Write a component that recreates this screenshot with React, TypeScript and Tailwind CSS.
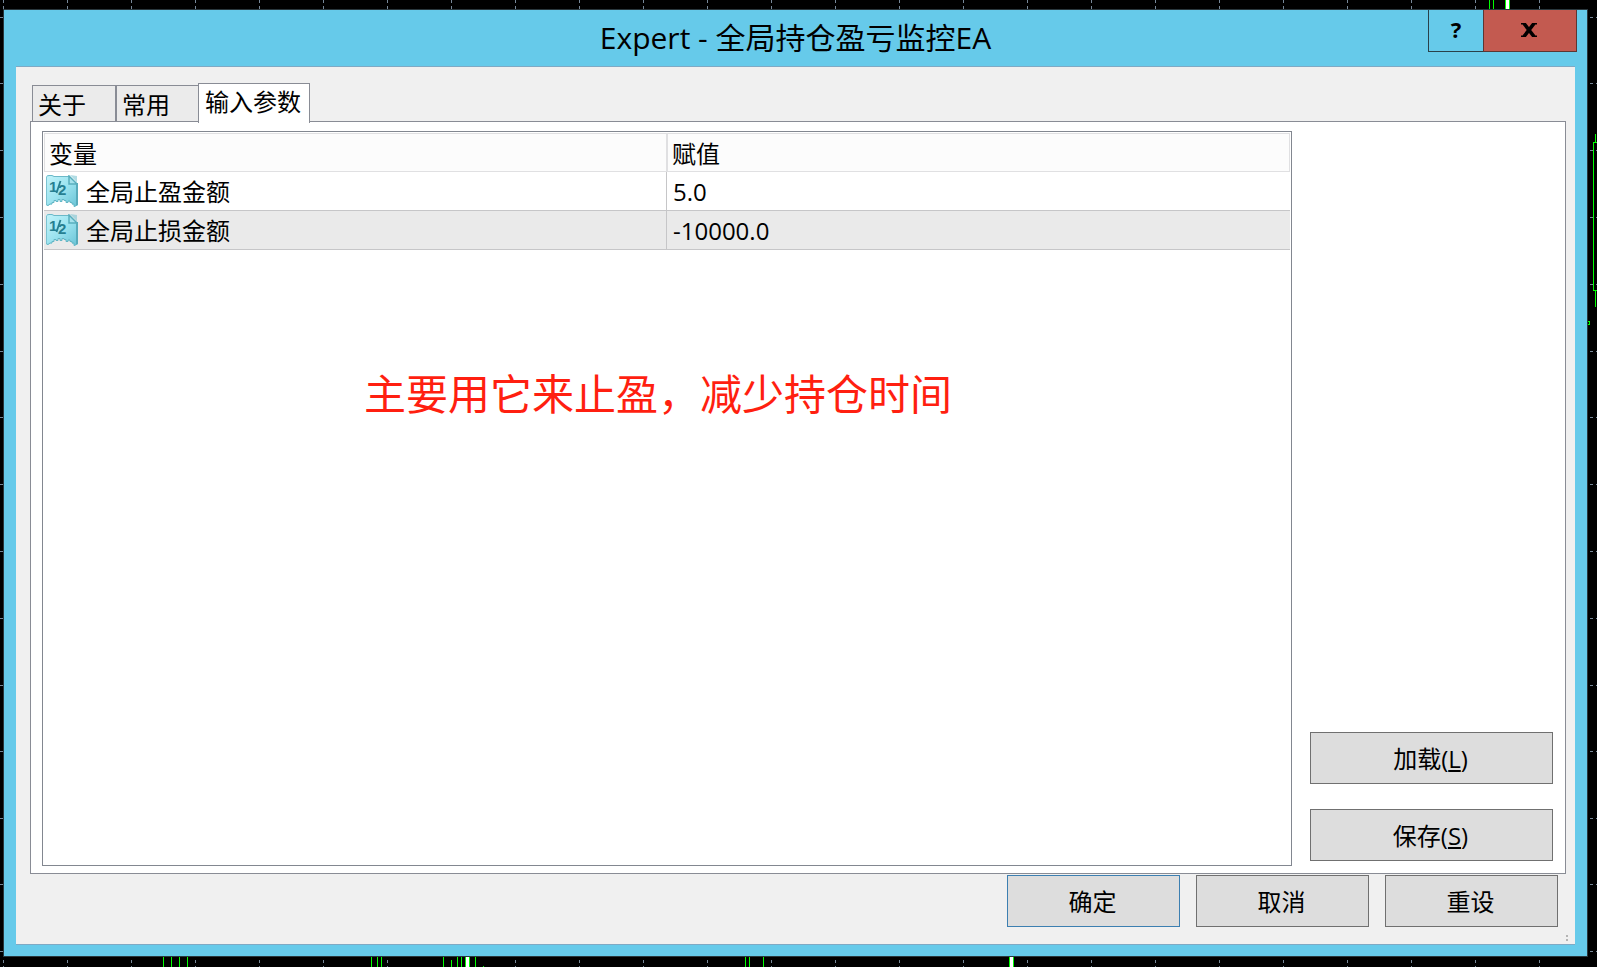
import React, { useState } from 'react';

interface Param {
    name: string;
    value: string;
}

const params: Param[] = [
    { name: '全局止盈金额', value: '5.0' },
    { name: '全局止损金额', value: '-10000.0' },
];

const tabs = [
    { label: '关于', width: 'w-[84px] border-r' },
    { label: '常用', width: 'w-[82px]' },
    { label: '输入参数', width: 'w-28' },
];

const gridX = Array.from({ length: 25 }, (_, i) => 3 + i * 64);
const gridY = [17, 83, 150, 217, 284, 351, 417, 484, 551, 618, 685, 751, 818, 884, 951];

// x, y, height of the thin price bars
const bars = [
    [1489, 0, 9], [1493, 0, 9],
    [163, 957, 10], [171, 957, 10], [179, 957, 10], [187, 957, 10],
    [371, 957, 10], [377, 957, 10], [381, 957, 10],
    [443, 957, 10], [451, 960, 7], [457, 957, 10], [461, 957, 10], [475, 957, 10], [483, 966, 1],
    [745, 957, 10], [749, 957, 10], [763, 957, 10],
    [1595, 134, 8], [1595, 291, 16],
];

const candles = [
    [1505, 0, 9], [465, 957, 10], [1009, 957, 10],
];

const ChartBackground: React.FC = () => (
    <svg className="absolute inset-0 h-full w-full" shapeRendering="crispEdges" aria-hidden="true">
        <g fill="#778899">
            {gridX.map(x => (
                <g key={x}>
                    <rect x={x} y={0} width={1} height={3} />
                    <rect x={x} y={6} width={1} height={3} />
                    <rect x={x} y={960} width={1} height={3} />
                    <rect x={x} y={966} width={1} height={1} />
                </g>
            ))}
            {gridY.map(y => (
                <g key={y}>
                    <rect x={0} y={y} width={3} height={1} />
                    <rect x={1590} y={y} width={3} height={1} />
                    <rect x={1596} y={y} width={1} height={1} />
                </g>
            ))}
        </g>
        <g fill="#00ff00">
            {bars.map(([x, y, h]) => (
                <rect key={`${x}-${y}`} x={x} y={y} width={1} height={h} />
            ))}
            {candles.map(([x, y, h]) => (
                <g key={x}>
                    <rect x={x} y={y} width={5} height={h} />
                    <rect x={x + 1} y={y} width={3} height={h} fill="#fff" />
                </g>
            ))}
            <path d="M1593 142h4v1h-3v147h3v1h-4z" />
            <path d="M1588 321h2v4h-2v-1h1v-2h-1z" />
        </g>
    </svg>
);

const ParamIcon: React.FC = () => (
    <svg width="32" height="32" viewBox="0 0 32 32" className="shrink-0" aria-hidden="true">
        <defs>
            <linearGradient id="sheet" x1="0" y1="0" x2="1" y2="1">
                <stop offset="0" stopColor="#c4f4fb" />
                <stop offset="0.5" stopColor="#9be3ef" />
                <stop offset="1" stopColor="#68c3d6" />
            </linearGradient>
        </defs>
        <path
            d="M0 1L3 0H6L8 1H23L32 9V30L28 32V29.5H26V28H24V26.5H22V28H20V26H18V25H16V27H14V25H12V27H10V26H8V28H6V29.5H4L2 31L0 30Z"
            fill="url(#sheet)"
        />
        <path d="M.5 30V1.5" fill="none" stroke="#7cc3d1" />
        <path d="M1 1L3 .5H6L8 1.5H23" fill="none" stroke="#6cb9c8" />
        <path d="M31 8V30" fill="none" stroke="#58abbb" strokeWidth="2" />
        <path
            d="M.5 30L2 30.5L4 29H6V27.5H8V25.5H10V26.5H12V24.5H14V26.5H16V24.5H18V25.5H20V27.5H22V26H24V27.5H26V29H28V31.5L31.5 30"
            fill="none"
            stroke="#64b6c5"
        />
        <path d="M23 1V9H31Z" fill="#a5e2ec" stroke="#58aebd" strokeWidth="1.5" />
        <path d="M24 0L31 1V7.5Z" fill="#7dc5d2" opacity="0.6" />
        <text x="3" y="17" fontFamily="'Liberation Sans', Arial, sans-serif" fontSize="15" fontWeight="700" fill="#267f91">1</text>
        <path d="M14.5 6L10.5 18" stroke="#267f91" strokeWidth="1.8" />
        <text x="12" y="20" fontFamily="'Liberation Sans', Arial, sans-serif" fontSize="15" fontWeight="700" fill="#267f91">2</text>
    </svg>
);

interface PushButtonProps {
    children: React.ReactNode;
    className: string;
}

const PushButton: React.FC<PushButtonProps> = ({ children, className }) => (
    <button type="button" className={`flex h-[52px] items-center justify-center border bg-[#dddddd] pt-0.5 pr-0.5 leading-8 hover:bg-[#e6eff5] ${className}`}>
        {children}
    </button>
);

const App: React.FC = () => {
    const [active, setActive] = useState(2);

    return (
        <div className="relative flex min-h-screen bg-black pt-[9px] pr-[9px] pb-[10px] pl-[3px] font-['Open_Sans','Noto_Sans_CJK_SC',sans-serif] text-2xl text-black">
            <ChartBackground />
            <div role="dialog" aria-labelledby="title" className="relative flex flex-1 flex-col border border-[#29373d] bg-[#66caea] px-3 pb-[11px]">
                <header className="relative flex h-14 items-center justify-center">
                    <h1 id="title" className="text-[30px] leading-10">Expert - 全局持仓盈亏监控EA</h1>
                    <div className="absolute top-0 -right-0.5 flex h-[42px]">
                        <button type="button" aria-label="帮助" className="w-[55px] border-b border-l border-[#29414a] pb-0.5 font-['Noto_Sans',sans-serif] text-[22px] font-bold">
                            ?
                        </button>
                        <button type="button" aria-label="关闭" className="flex w-[94px] items-center justify-center border-x border-b border-[#5c3633] bg-[#c35a50] pr-0.5">
                            <svg width="16" height="14" viewBox="0 0 16 14" className="mb-0.5" aria-hidden="true">
                                <path d="M3 .5L13 13.5M13 .5L3 13.5" stroke="#000" strokeWidth="3.6" />
                                <path d="M0 0H5V1.5H0zM11 0H16V1.5H11zM0 12.5H5V14H0zM11 12.5H16V14H11z" />
                            </svg>
                        </button>
                    </div>
                </header>

                <main className="relative flex flex-1 flex-col border-y border-[#7fa9c4] bg-[#f0f0f0] pt-4">
                    <div role="tablist" className="flex items-end pl-4">
                        {tabs.map((tab, i) => (
                            <button
                                key={tab.label}
                                type="button"
                                role="tab"
                                aria-selected={active === i}
                                onClick={() => setActive(i)}
                                className={`${tab.width} border-[#898c95] text-left leading-8 whitespace-nowrap ${
                                    active === i
                                        ? 'relative z-10 -mb-0.5 h-10 border-x border-t bg-white px-1.5 pb-1'
                                        : 'h-9 border-t border-l bg-[#ebebeb] px-[5px] pt-0.5'
                                }`}
                            >
                                {tab.label}
                            </button>
                        ))}
                    </div>

                    <section role="tabpanel" className="mr-[9px] ml-[14px] flex flex-1 border border-[#898c95] bg-white pr-3 pl-[11px]">
                        <div className="mt-[9px] mb-[7px] flex-1 border border-[#828790] p-px">
                            <table className="w-full table-fixed border-separate border-spacing-0 text-left">
                                <thead>
                                    <tr className="bg-[#fcfcfc]">
                                        <th className="h-[39px] w-1/2 border border-[#e0e0e2] p-0 pt-0.5 pl-1 leading-8 font-normal">变量</th>
                                        <th className="h-[39px] border-y border-r border-l border-[#e0e0e2] p-0 pt-0.5 pl-1 leading-8 font-normal">赋值</th>
                                    </tr>
                                </thead>
                                <tbody>
                                    {params.map(p => (
                                        <tr key={p.name} className="even:bg-[#eaeaea]">
                                            <td className="h-[39px] border-r border-b border-[#c6c6c8] p-0 pl-0.5">
                                                <div className="flex items-center gap-2 leading-8">
                                                    <ParamIcon />
                                                    <span className="pt-0.5">{p.name}</span>
                                                </div>
                                            </td>
                                            <td className="h-[39px] border-b border-[#c6c6c8] p-0 pt-0.5 pl-1.5 leading-8">{p.value}</td>
                                        </tr>
                                    ))}
                                </tbody>
                            </table>
                            <p className="mt-28 pl-80 text-[42px] leading-[64px] text-[#ff1f10]">主要用它来止盈，减少持仓时间</p>
                        </div>
                        <div className="ml-[18px] flex w-[243px] flex-col justify-end gap-[25px] pb-3">
                            <PushButton className="border-[#707070]"><span>加载(<u>L</u>)</span></PushButton>
                            <PushButton className="border-[#707070]"><span>保存(<u>S</u>)</span></PushButton>
                        </div>
                    </section>

                    <footer className="flex justify-end gap-4 pt-px pr-[17px] pb-[17px]">
                        <PushButton className="w-[173px] border-[#3c7fb1]">确定</PushButton>
                        <PushButton className="w-[173px] border-[#707070]">取消</PushButton>
                        <PushButton className="w-[173px] border-[#707070]">重设</PushButton>
                    </footer>
                    <svg width="3" height="8" className="absolute right-1.5 bottom-0.5" shapeRendering="crispEdges" aria-hidden="true">
                        <path d="M0 1h2v2h-2zM0 5h2v2h-2z" fill="#b4b4b4" />
                    </svg>
                </main>
            </div>
        </div>
    );
};

export default App;
